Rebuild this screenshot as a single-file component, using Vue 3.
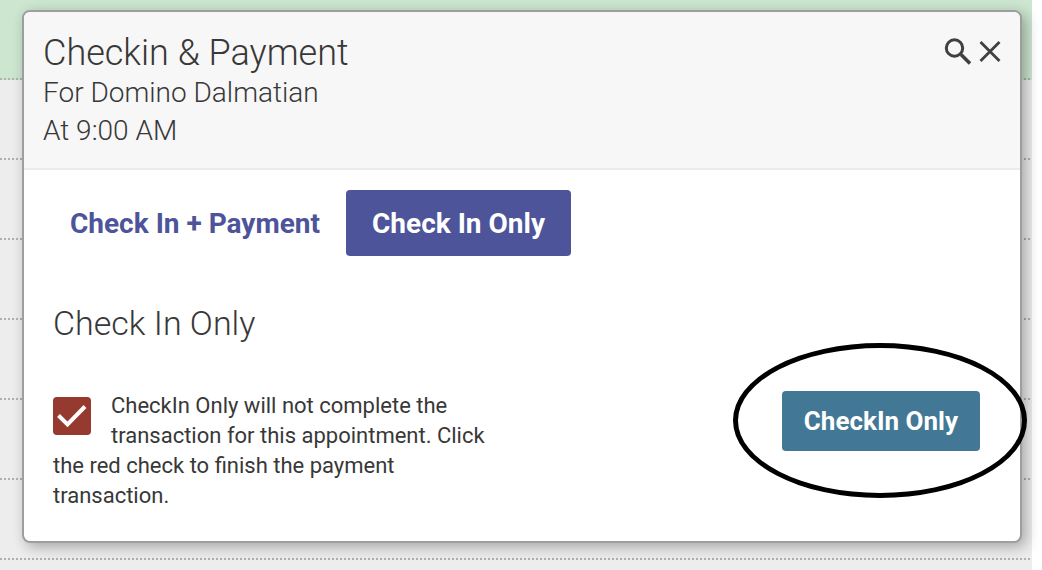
<template>
    <div class="page">
        <div class="calendar" aria-hidden="true">
            <div v-for="slot in slots" :key="slot.id" class="slot" :class="{ booked: slot.booked }"></div>
        </div>

        <section v-if="isVisible" class="dialog" role="dialog" aria-labelledby="dialog-title">
            <header class="dialog-header">
                <div class="heading">
                    <h1 id="dialog-title">Checkin &amp; Payment</h1>
                    <p>For {{ appointment.patient }}</p>
                    <p>At {{ appointment.time }}</p>
                </div>
                <div class="tools">
                    <button type="button" class="tool" aria-label="Search">
                        <svg viewBox="0 0 28 28" width="28" height="28">
                            <circle cx="10.5" cy="10" r="8.2" fill="none" stroke="currentColor" stroke-width="3" />
                            <path d="M17 16.5 L26 25.5" fill="none" stroke="currentColor" stroke-width="3.6" />
                        </svg>
                    </button>
                    <button type="button" class="tool" aria-label="Close" @click="isVisible = false">
                        <svg viewBox="0 0 24 28" width="24" height="28">
                            <path d="M2.5 4 L21.5 23 M21.5 4 L2.5 23" fill="none" stroke="currentColor" stroke-width="2.8" />
                        </svg>
                    </button>
                </div>
            </header>

            <div class="dialog-body">
                <nav class="tabs">
                    <button
                        v-for="tab in tabs"
                        :key="tab"
                        type="button"
                        class="tab"
                        :class="{ active: tab === activeTab }"
                        @click="activeTab = tab"
                    >{{ tab }}</button>
                </nav>

                <h2>{{ activeTab }}</h2>

                <div class="row">
                    <div class="notice">
                        <input id="finish" v-model="finished" type="checkbox" class="check">
                        <label for="finish">CheckIn Only will not complete the transaction for this appointment. Click the red check to finish the payment transaction.</label>
                    </div>
                    <div class="action">
                        <button type="button" class="submit">CheckIn Only</button>
                        <span class="ring"></span>
                    </div>
                </div>
            </div>
        </section>
    </div>
</template>

<script setup>
import { ref } from 'vue'

const isVisible = ref(true)
const finished = ref(true)

const tabs = ['Check In + Payment', 'Check In Only']
const activeTab = ref('Check In Only')

const appointment = {
    patient: 'Domino Dalmatian',
    time: '9:00 AM'
}

// Calendar rows behind the dialog
const slots = Array.from({ length: 24 }, (_, i) => ({ id: i, booked: i === 0 }))
</script>

<style>
body {
    margin: 0;
    background: #fff;
}
</style>

<style scoped>
.page {
    position: relative;
    box-sizing: border-box;
    min-height: 100vh;
    padding: 10px 20px 26px 22px;
    overflow: hidden;
    font-family: Roboto, "Liberation Sans", sans-serif;
    color: #383838;
}

.calendar {
    position: absolute;
    inset: 0 10px 0 0;
    overflow: hidden;
    background: #ededed;
}

.slot {
    box-sizing: border-box;
    height: 80px;
    background: repeating-linear-gradient(to right, #b0b0b0 0 2px, transparent 2px 4px) left bottom / 100% 2px no-repeat;
}

.slot.booked {
    background-color: #cce6d0;
}

.dialog {
    position: relative;
    border: 2px solid #9c9f9d;
    border-radius: 8px;
    background: #fff;
    box-shadow: 4px 4px 14px rgba(0, 0, 0, 0.3);
}

.dialog-header {
    display: flex;
    justify-content: space-between;
    align-items: flex-start;
    padding: 20px 18px 18px 19px;
    border-bottom: 2px solid #ebebeb;
    border-radius: 6px 6px 0 0;
    background: #f7f7f7;
}

h1,
h2,
p {
    margin: 0;
    font-weight: 300;
}

h1 {
    font-size: 36px;
    line-height: 42px;
}

.heading p {
    font-size: 28px;
    line-height: 38px;
}

.tools {
    display: flex;
    gap: 6px;
    padding-top: 6px;
}

button {
    border: 0;
    font-family: inherit;
    cursor: pointer;
}

.tool {
    display: flex;
    padding: 0;
    background: none;
    color: #404040;
}

.dialog-body {
    padding: 20px 40px 30px 29px;
}

.tabs {
    display: flex;
}

.tab {
    padding: 2px 26px 0;
    border-radius: 4px;
    background: none;
    color: #4d5499;
    font-size: 28px;
    font-weight: 700;
    line-height: 64px;
}

.tab:first-child {
    padding-left: 17px;
}

.tab.active {
    background: #4d5499;
    color: #fff;
}

h2 {
    margin: 48px 0 49px;
    font-size: 34px;
    line-height: 38px;
}

.row {
    display: flex;
    justify-content: space-between;
    align-items: flex-start;
}

.notice {
    width: 48%;
    font-size: 22px;
    line-height: 30px;
}

.check {
    float: left;
    appearance: none;
    width: 38px;
    height: 38px;
    margin: 6px 20px 0 0;
    border-radius: 4px;
    background: #963a30;
    cursor: pointer;
}

.check:checked {
    background: #963a30 url("data:image/svg+xml,%3Csvg xmlns='http://www.w3.org/2000/svg' viewBox='0 0 38 38'%3E%3Cpath d='M5.5 18.5 L14.5 27.5 L32 9.5' fill='none' stroke='%23fff' stroke-width='4'/%3E%3C/svg%3E") center / 38px 38px no-repeat;
}

.action {
    position: relative;
}

.submit {
    display: block;
    padding: 0 22px;
    border-radius: 4px;
    background: #427896;
    color: #fff;
    font-size: 26px;
    font-weight: 700;
    line-height: 60px;
}

/* Highlight laid over the button */
.ring {
    position: absolute;
    inset: -48px -47px -47px -49px;
    border: 5px solid #000;
    border-radius: 50%;
    pointer-events: none;
}
</style>
